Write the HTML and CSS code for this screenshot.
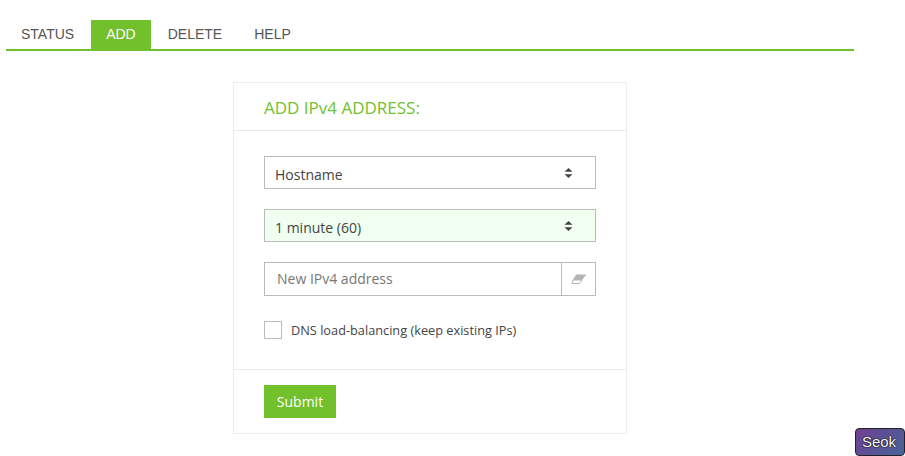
FILE: index.html
```html
<!DOCTYPE html>
<html lang="en">
<head>
<meta charset="utf-8">
<title>Add IPv4 address</title>
<link rel="stylesheet" href="styles.css">
</head>
<body>
<nav class="tabs">
  <a class="tab">STATUS</a>
  <a class="tab tab-active">ADD</a>
  <a class="tab">DELETE</a>
  <a class="tab">HELP</a>
</nav>
<main class="card">
  <h2 class="card-title">ADD IPv4 ADDRESS:</h2>
  <div class="card-body">
    <div class="select">
      <span class="select-text">Hostname</span>
      <svg class="updown" width="9" height="10" viewBox="0 0 9 10"><path d="M4.500 0 8.500 3.800H.5zM.5 6.200h8L4.500 10z" fill="#444"/></svg>
    </div>
    <div class="select select-filled">
      <span class="select-text">1 minute (60)</span>
      <svg class="updown" width="9" height="10" viewBox="0 0 9 10"><path d="M4.500 0 8.500 3.800H.5zM.5 6.200h8L4.500 10z" fill="#444"/></svg>
    </div>
    <div class="input-group">
      <div class="input">New IPv4 address</div>
      <div class="addon">
        <svg class="eraser" width="16" height="11" viewBox="0 0 16 11"><path d="M5 .5H15.500L11 6H2z" fill="#b4b4b4"/><path d="M2 6H11L8.500 9.500H.7z" fill="#fff" stroke="#b4b4b4" stroke-width="1"/></svg>
      </div>
    </div>
    <label class="check">
      <span class="box"></span>
      <span>DNS load-balancing (keep existing IPs)</span>
    </label>
  </div>
  <div class="card-foot">
    <button class="submit" type="button">Submit</button>
  </div>
</main>
<div class="badge">Seok</div>
</body>
</html>
```
FILE: styles.css
```css
html, body { margin: 0; padding: 0; background: #fff; }
body {
  width: 905px;
  height: 456px;
  position: relative;
  overflow: hidden;
  font-family: "Open Sans", sans-serif;
  color: #444;
}
.tabs {
  display: flex;
  gap: 2px;
  margin: 20px 51px 0 6px;
  border-bottom: 2px solid #72c02c;
  height: 29px;
}
.tab {
  font: 14px/29px "Liberation Sans", Arial, sans-serif;
  color: #555;
  padding: 0 15px;
}
.tab-active { background: #72c02c; color: #fff; }
.card {
  width: 392px;
  height: 350px;
  margin: 31px 0 0 233px;
  border: 1px solid #eee;
  display: flex;
  flex-direction: column;
}
.card-title {
  margin: 0;
  height: 47px;
  padding: 0 30px;
  font-size: 17px;
  font-weight: 400;
  line-height: 50px;
  color: #72c02c;
  border-bottom: 1px solid #e8e8e8;
}
.card-body {
  flex: 1;
  padding: 25px 30px 0;
  display: flex;
  flex-direction: column;
  border-bottom: 1px solid #e8e8e8;
}
.select {
  height: 33px;
  box-sizing: border-box;
  border: 1px solid #bbb;
  margin-bottom: 20px;
  padding: 0 22px 0 10px;
  display: flex;
  align-items: center;
  justify-content: space-between;
  font-size: 14px;
  color: #444;
}
.select-text { padding-top: 3px; }
.select-filled { background: #f0fff0; }
.input-group {
  display: flex;
  height: 34px;
  box-sizing: border-box;
  border: 1px solid #bbb;
}
.input {
  flex: 1;
  padding-left: 12px;
  font-size: 14px;
  line-height: 32px;
  color: #777;
}
.addon {
  width: 33px;
  border-left: 1px solid #bbb;
  display: flex;
  align-items: center;
  justify-content: center;
}
.check {
  display: flex;
  align-items: center;
  gap: 9px;
  margin-top: 25px;
  font-size: 12.75px;
  color: #444;
}
.box {
  width: 16px;
  height: 16px;
  border: 1px solid #bbb;
}
.card-foot { height: 64px; padding: 15px 30px 0; box-sizing: border-box; flex: none; margin-bottom: -1px; }
.submit {
  display: block;
  width: 72px;
  height: 33px;
  border: 0;
  padding: 0;
  background: #72c02c;
  color: #fff;
  font: 14px "Open Sans", sans-serif;
}
.badge {
  position: absolute;
  right: 0;
  top: 428px;
  width: 48px;
  height: 26px;
  border: 1px solid #222;
  border-radius: 4px;
  background: linear-gradient(135deg, #70408f, #46639a);
  color: #fff;
  font: 15px/26px "Liberation Sans", Arial, sans-serif;
  text-align: center;
  text-indent: -2px;
  text-shadow: 0 0 1px #000, 0 0 1px #000, 0 0 1px #000;
}
```
